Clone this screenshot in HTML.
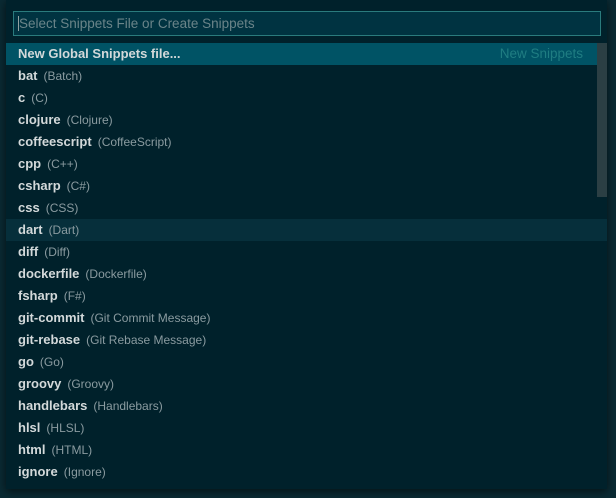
<!DOCTYPE html>
<html><head><meta charset="utf-8"><style>
html,body{margin:0;padding:0}
body{width:616px;height:498px;background:#0a2a33;position:relative;overflow:hidden;font-family:"Liberation Sans",sans-serif}
.panel{position:absolute;left:6px;top:0;width:601px;height:489px;background:#00212b;box-shadow:0 2px 8px rgba(0,0,0,.6)}
.input{position:absolute;left:7px;top:11px;width:586px;height:23px;border:1px solid #2a7b7d;background:#003341;box-sizing:content-box}
.input span{position:absolute;left:4px;top:4px;font-size:13.5px;color:#6a8489;border-left:1px solid #93a1a1}
.row{position:absolute;left:0;width:591px;height:22px;line-height:22px;font-size:13px;color:#d3d9da;font-weight:bold;padding-left:12px;box-sizing:border-box}
.row i{font-style:normal;font-weight:normal;font-size:12px;color:#8a9ba0;margin-left:6px}
.sel{background:#005365}
.hov{background:#062f3b}
.right{position:absolute;top:0;font-weight:normal;color:#1f7d82;font-size:13.5px}
.sb{position:absolute;left:591px;top:43px;width:10px;height:154px;background:#2b3f44}
</style></head><body>
<div class="panel">
<div class="input"><span>Select Snippets File or Create Snippets</span></div>
<div class="row sel" style="top:43px;width:601px">New Global Snippets file...<span class="right" style="right:24px">New Snippets</span></div>
<div class="row" style="top:65px">bat<i>(Batch)</i></div>
<div class="row" style="top:87px">c<i>(C)</i></div>
<div class="row" style="top:109px">clojure<i>(Clojure)</i></div>
<div class="row" style="top:131px">coffeescript<i>(CoffeeScript)</i></div>
<div class="row" style="top:153px">cpp<i>(C++)</i></div>
<div class="row" style="top:175px">csharp<i>(C#)</i></div>
<div class="row" style="top:197px">css<i>(CSS)</i></div>
<div class="row hov" style="top:219px;width:601px">dart<i>(Dart)</i></div>
<div class="row" style="top:241px">diff<i>(Diff)</i></div>
<div class="row" style="top:263px">dockerfile<i>(Dockerfile)</i></div>
<div class="row" style="top:285px">fsharp<i>(F#)</i></div>
<div class="row" style="top:307px">git-commit<i>(Git Commit Message)</i></div>
<div class="row" style="top:329px">git-rebase<i>(Git Rebase Message)</i></div>
<div class="row" style="top:351px">go<i>(Go)</i></div>
<div class="row" style="top:373px">groovy<i>(Groovy)</i></div>
<div class="row" style="top:395px">handlebars<i>(Handlebars)</i></div>
<div class="row" style="top:417px">hlsl<i>(HLSL)</i></div>
<div class="row" style="top:439px">html<i>(HTML)</i></div>
<div class="row" style="top:461px">ignore<i>(Ignore)</i></div>
<div class="sb"></div>
</div>
</body></html>
